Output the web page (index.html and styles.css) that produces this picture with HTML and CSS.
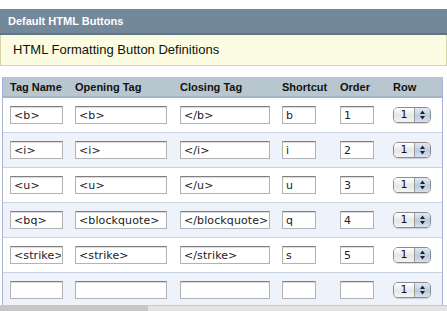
FILE: index.html
```html
<!DOCTYPE html>
<html lang="en">
<head>
    <meta charset="UTF-8">
    <title>Default HTML Buttons</title>
    <link rel="stylesheet" href="styles.css">
</head>
<body>
    <div class="panel">
        <div class="panel-title">Default HTML Buttons</div>
        <div class="panel-note">HTML Formatting Button Definitions</div>

        <table class="buttons">
            <colgroup>
                <col class="col-name">
                <col class="col-open">
                <col class="col-close">
                <col class="col-key">
                <col class="col-order">
                <col class="col-row">
            </colgroup>
            <thead>
                <tr>
                    <th>Tag Name</th>
                    <th>Opening Tag</th>
                    <th>Closing Tag</th>
                    <th>Shortcut</th>
                    <th>Order</th>
                    <th>Row</th>
                </tr>
            </thead>
            <tbody>
                <tr>
                    <td><input class="in-name" type="text" value="&lt;b&gt;"></td>
                    <td><input class="in-open" type="text" value="&lt;b&gt;"></td>
                    <td><input class="in-close" type="text" value="&lt;/b&gt;"></td>
                    <td><input class="in-small" type="text" value="b"></td>
                    <td><input class="in-small" type="text" value="1"></td>
                    <td><span class="row-select"><span class="row-value">1</span><span class="row-arrows"><svg width="7" height="10" viewBox="0 0 7 10"><path d="M3.5 0.5 L6 4 L1 4 Z M1 6 L6 6 L3.5 9.5 Z" fill="#222"/></svg></span></span></td>
                </tr>
                <tr>
                    <td><input class="in-name" type="text" value="&lt;i&gt;"></td>
                    <td><input class="in-open" type="text" value="&lt;i&gt;"></td>
                    <td><input class="in-close" type="text" value="&lt;/i&gt;"></td>
                    <td><input class="in-small" type="text" value="i"></td>
                    <td><input class="in-small" type="text" value="2"></td>
                    <td><span class="row-select"><span class="row-value">1</span><span class="row-arrows"><svg width="7" height="10" viewBox="0 0 7 10"><path d="M3.5 0.5 L6 4 L1 4 Z M1 6 L6 6 L3.5 9.5 Z" fill="#222"/></svg></span></span></td>
                </tr>
                <tr>
                    <td><input class="in-name" type="text" value="&lt;u&gt;"></td>
                    <td><input class="in-open" type="text" value="&lt;u&gt;"></td>
                    <td><input class="in-close" type="text" value="&lt;/u&gt;"></td>
                    <td><input class="in-small" type="text" value="u"></td>
                    <td><input class="in-small" type="text" value="3"></td>
                    <td><span class="row-select"><span class="row-value">1</span><span class="row-arrows"><svg width="7" height="10" viewBox="0 0 7 10"><path d="M3.5 0.5 L6 4 L1 4 Z M1 6 L6 6 L3.5 9.5 Z" fill="#222"/></svg></span></span></td>
                </tr>
                <tr>
                    <td><input class="in-name" type="text" value="&lt;bq&gt;"></td>
                    <td><input class="in-open" type="text" value="&lt;blockquote&gt;"></td>
                    <td><input class="in-close" type="text" value="&lt;/blockquote&gt;"></td>
                    <td><input class="in-small" type="text" value="q"></td>
                    <td><input class="in-small" type="text" value="4"></td>
                    <td><span class="row-select"><span class="row-value">1</span><span class="row-arrows"><svg width="7" height="10" viewBox="0 0 7 10"><path d="M3.5 0.5 L6 4 L1 4 Z M1 6 L6 6 L3.5 9.5 Z" fill="#222"/></svg></span></span></td>
                </tr>
                <tr>
                    <td><input class="in-name" type="text" value="&lt;strike&gt;"></td>
                    <td><input class="in-open" type="text" value="&lt;strike&gt;"></td>
                    <td><input class="in-close" type="text" value="&lt;/strike&gt;"></td>
                    <td><input class="in-small" type="text" value="s"></td>
                    <td><input class="in-small" type="text" value="5"></td>
                    <td><span class="row-select"><span class="row-value">1</span><span class="row-arrows"><svg width="7" height="10" viewBox="0 0 7 10"><path d="M3.5 0.5 L6 4 L1 4 Z M1 6 L6 6 L3.5 9.5 Z" fill="#222"/></svg></span></span></td>
                </tr>
                <tr>
                    <td><input class="in-name" type="text" value=""></td>
                    <td><input class="in-open" type="text" value=""></td>
                    <td><input class="in-close" type="text" value=""></td>
                    <td><input class="in-small" type="text" value=""></td>
                    <td><input class="in-small" type="text" value=""></td>
                    <td><span class="row-select"><span class="row-value">1</span><span class="row-arrows"><svg width="7" height="10" viewBox="0 0 7 10"><path d="M3.5 0.5 L6 4 L1 4 Z M1 6 L6 6 L3.5 9.5 Z" fill="#222"/></svg></span></span></td>
                </tr>
            </tbody>
        </table>
    </div>

    <!-- window scrollbar strip along the bottom edge -->
    <div class="hscroll"><div class="hscroll-thumb"></div></div>
</body>
</html>
```

FILE: styles.css
```css
body {
    margin: 0;
    font-family: "Liberation Sans", Arial, sans-serif;
    background-color: #fff;
    color: #111;
}

.panel {
    margin-top: 9px;
}

.panel-title {
    background-color: #73899a;
    color: #fff;
    font-size: 11px;
    font-weight: bold;
    height: 24px;
    line-height: 24px;
    padding-left: 8px;
    border-bottom: 2px solid #5f7484;
}

.panel-note {
    background-color: #fcfce2;
    border: 1px solid #d9d4a8;
    border-top: none;
    height: 30px;
    line-height: 30px;
    padding-left: 12px;
    font-size: 13px;
    color: #111;
}

.buttons {
    margin: 11px 0 0 2px;
    border-collapse: separate;
    border-spacing: 0;
    table-layout: fixed;
    width: 441px;
    border-left: 1px solid #a9b4d6;
    border-right: 1px solid #a9b4d6;
}

.col-name { width: 65px; }
.col-open { width: 105px; }
.col-close { width: 102px; }
.col-key { width: 58px; }
.col-order { width: 53px; }
.col-row { width: 56px; }

.buttons th {
    background-color: #b8c6d0;
    height: 19px;
    padding: 0 0 0 7px;
    text-align: left;
    font-size: 11px;
    font-weight: bold;
    color: #111;
    border-bottom: 2px solid #a3b3bf;
    white-space: nowrap;
}

.buttons td {
    height: 34px;
    padding: 0 0 0 7px;
    vertical-align: middle;
    border-bottom: 1px solid #c9d2e2;
}

.buttons tbody tr:nth-child(even) td {
    background-color: #eef2fa;
}

.buttons input {
    display: block;
    box-sizing: border-box;
    height: 18px;
    margin: 0;
    padding: 0 1px 0 3px;
    font-family: "DejaVu Sans", "Lucida Grande", sans-serif;
    font-size: 11px;
    letter-spacing: 0.1px;
    color: #222;
    background-color: #fff;
    border: 1px solid #b3b3b3;
    border-top-color: #7f7f7f;
    box-shadow: inset 0 1px 1px rgba(0, 0, 0, 0.15);
    outline: none;
}

.in-name { width: 53px; }
.in-open { width: 92px; }
.in-close { width: 90px; }
.in-small { width: 34px; }

.row-select {
    display: flex;
    width: 38px;
    height: 16px;
    box-sizing: border-box;
    border: 1px solid #8c8c8c;
    border-radius: 5px;
    overflow: hidden;
    box-shadow: 0 1px 1px rgba(0, 0, 0, 0.15);
}

.row-value {
    flex: 1;
    text-align: center;
    font-family: "DejaVu Sans", "Lucida Grande", sans-serif;
    font-size: 11px;
    line-height: 14px;
    color: #111;
    background: linear-gradient(#ffffff, #e6e6e6 55%, #f4f4f4);
}

.row-arrows {
    width: 15px;
    display: flex;
    align-items: center;
    justify-content: center;
    border-left: 1px solid #9a9a9a;
    background: linear-gradient(#e2eaf4, #b9cbe0 55%, #d6e2f0);
}

.hscroll {
    position: fixed;
    left: 0;
    right: 0;
    bottom: 0;
    height: 5px;
    background-color: #e4e4e4;
    border-top: 1px solid #c8c8c8;
}

.hscroll-thumb {
    width: 148px;
    height: 100%;
    background-color: #c6c6c6;
}
```
